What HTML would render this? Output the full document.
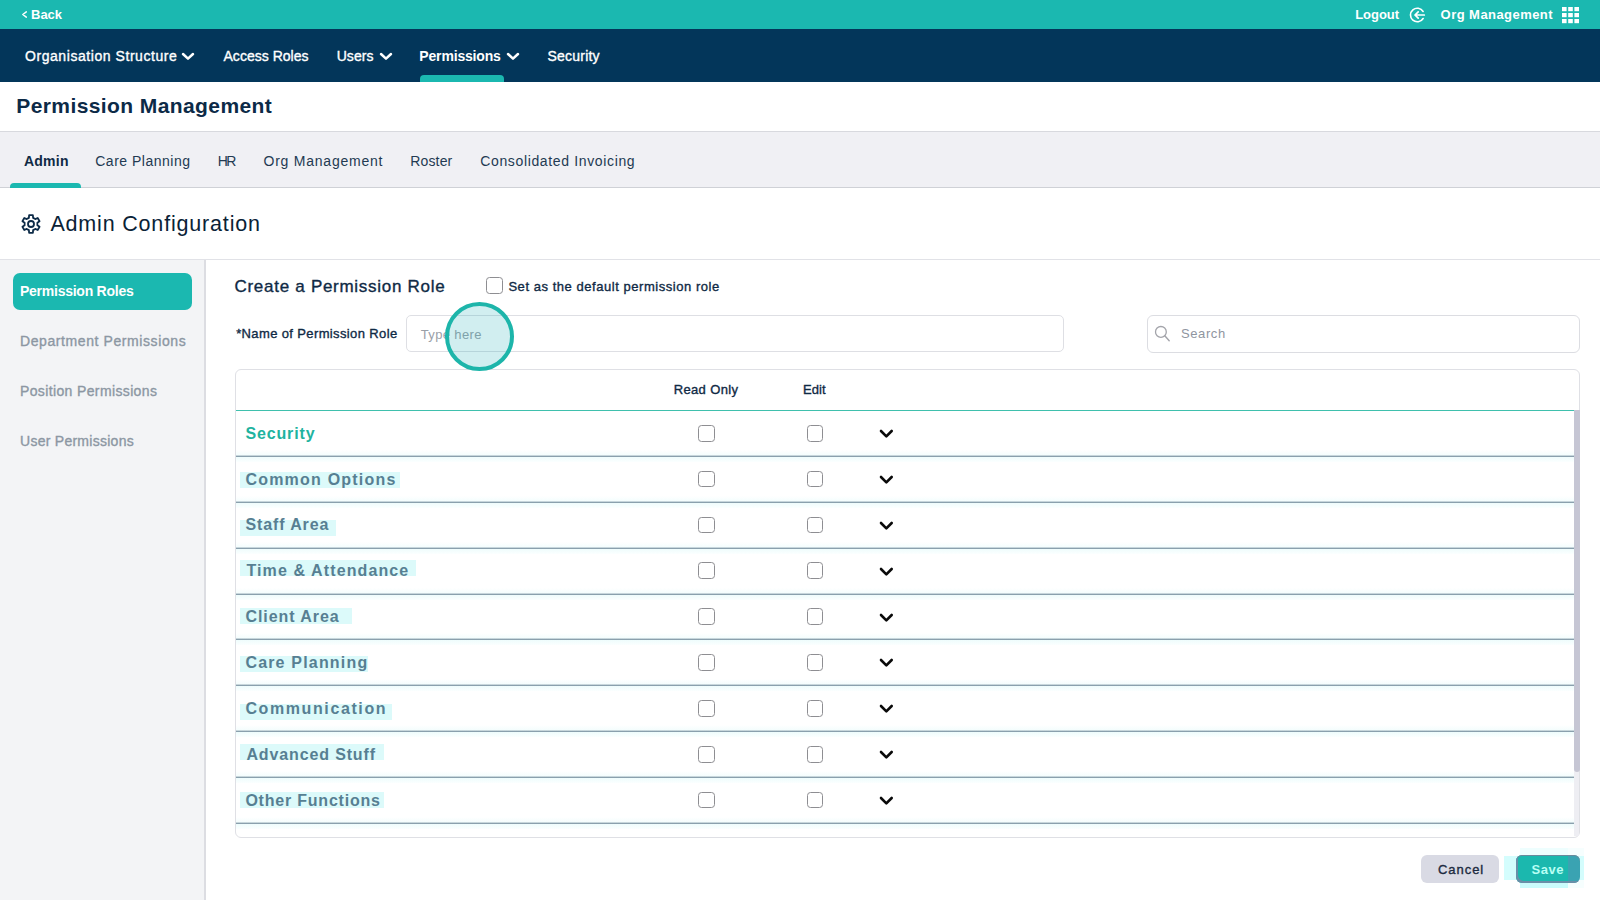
<!DOCTYPE html>
<html><head><meta charset="utf-8"><title>Permission Management</title>
<style>
html,body{margin:0;padding:0;}
body{width:1600px;height:900px;overflow:hidden;position:relative;background:#fff;font-family:"Liberation Sans",sans-serif;}
.t{position:absolute;white-space:nowrap;line-height:1;}
.abs{position:absolute;}
.cb{position:absolute;box-sizing:border-box;width:16.8px;height:16.8px;border:1.2px solid #8e8e92;border-radius:3.5px;background:#fff;}
</style></head><body>
<div class="abs" style="left:0px;top:0px;width:1600px;height:29px;background:#1bb8b0"></div>
<div class="abs" style="left:0px;top:29px;width:1600px;height:53px;background:#03365a"></div>
<svg class="abs" style="left:20px;top:9px" width="10" height="12" viewBox="0 0 10 12"><polyline points="6.3,2.9 2.8,5.5 6.3,8.1" fill="none" stroke="#fff" stroke-width="1.5" stroke-linecap="round" stroke-linejoin="round"/></svg>
<div class="t" style="left:31.00px;top:8px;font-size:13px;font-weight:700;color:#fff;letter-spacing:0.0px;">Back</div>
<div class="t" style="left:1355.20px;top:8px;font-size:13px;font-weight:700;color:#fff;letter-spacing:-0.04px;">Logout</div>
<svg class="abs" style="left:1408px;top:7px" width="20" height="16" viewBox="0 0 20 16"><path d="M15.1,4.5 A6.8,6.8 0 1 0 15.1,11.5" fill="none" stroke="#fff" stroke-width="1.6" stroke-linecap="round"/><path d="M16.3,8 H7 M10.2,4.8 L7,8 L10.2,11.2" fill="none" stroke="#fff" stroke-width="1.7" stroke-linecap="round" stroke-linejoin="round"/></svg>
<div class="t" style="left:1440.60px;top:8px;font-size:13px;font-weight:700;color:#fff;letter-spacing:0.446px;">Org Management</div>
<svg class="abs" style="left:1562.2px;top:7px" width="18" height="18" viewBox="0 0 18 18"><rect x="0.0" y="0.0" width="4.6" height="4.2" fill="#fff"/><rect x="6.2" y="0.0" width="4.6" height="4.2" fill="#fff"/><rect x="12.4" y="0.0" width="4.6" height="4.2" fill="#fff"/><rect x="0.0" y="6.0" width="4.6" height="4.2" fill="#fff"/><rect x="6.2" y="6.0" width="4.6" height="4.2" fill="#fff"/><rect x="12.4" y="6.0" width="4.6" height="4.2" fill="#fff"/><rect x="0.0" y="12.0" width="4.6" height="4.2" fill="#fff"/><rect x="6.2" y="12.0" width="4.6" height="4.2" fill="#fff"/><rect x="12.4" y="12.0" width="4.6" height="4.2" fill="#fff"/></svg>
<div class="t" style="left:25.00px;top:49px;font-size:14px;color:#fff;letter-spacing:0.56px;-webkit-text-stroke:0.35px #fff;">Organisation Structure</div>
<svg class="abs" style="left:180.20px;top:51.30px" width="16.00" height="10.70" viewBox="0 0 16.00 10.70"><polyline points="3,3 8.00,7.70 13.00,3" fill="none" stroke="#fff" stroke-width="2.5" stroke-linecap="round" stroke-linejoin="round"/></svg>
<div class="t" style="left:223.50px;top:49px;font-size:14px;color:#fff;letter-spacing:0.022px;-webkit-text-stroke:0.35px #fff;">Access Roles</div>
<div class="t" style="left:336.65px;top:49px;font-size:14px;color:#fff;letter-spacing:0.089px;-webkit-text-stroke:0.35px #fff;">Users</div>
<svg class="abs" style="left:377.90px;top:51.30px" width="16.00" height="10.70" viewBox="0 0 16.00 10.70"><polyline points="3,3 8.00,7.70 13.00,3" fill="none" stroke="#fff" stroke-width="2.5" stroke-linecap="round" stroke-linejoin="round"/></svg>
<div class="t" style="left:419.35px;top:49px;font-size:14px;font-weight:700;color:#fff;letter-spacing:-0.175px;">Permissions</div>
<svg class="abs" style="left:505.20px;top:51.30px" width="16.00" height="10.70" viewBox="0 0 16.00 10.70"><polyline points="3,3 8.00,7.70 13.00,3" fill="none" stroke="#fff" stroke-width="2.5" stroke-linecap="round" stroke-linejoin="round"/></svg>
<div class="t" style="left:547.50px;top:49px;font-size:14px;color:#fff;letter-spacing:0.214px;-webkit-text-stroke:0.35px #fff;">Security</div>
<div class="abs" style="left:420px;top:75px;width:84px;height:7px;background:#1bb8b0;border-radius:4px 4px 0 0"></div>
<div class="t" style="left:16.30px;top:95px;font-size:21px;font-weight:700;color:#0c2a47;letter-spacing:0.405px;">Permission Management</div>
<div class="abs" style="left:0px;top:131px;width:1600px;height:55px;background:#f0f0f4;border-top:1px solid #d8d9de;border-bottom:1px solid #cfd1d6"></div>
<div class="t" style="left:24.00px;top:154px;font-size:14px;font-weight:700;color:#0f2a45;letter-spacing:0.225px;">Admin</div>
<div class="t" style="left:95.25px;top:154px;font-size:14px;color:#233a52;letter-spacing:0.5px;">Care Planning</div>
<div class="t" style="left:217.75px;top:154px;font-size:14px;color:#233a52;letter-spacing:-1.5px;">HR</div>
<div class="t" style="left:263.50px;top:154px;font-size:14px;color:#233a52;letter-spacing:0.769px;">Org Management</div>
<div class="t" style="left:410.25px;top:154px;font-size:14px;color:#233a52;letter-spacing:0.15px;">Roster</div>
<div class="t" style="left:480.25px;top:154px;font-size:14px;color:#233a52;letter-spacing:0.643px;">Consolidated Invoicing</div>
<div class="abs" style="left:10px;top:182.5px;width:71px;height:5px;background:#1bb8b0;border-radius:4px 4px 0 0"></div>
<svg class="abs" style="left:18.8px;top:212px" width="24" height="24" viewBox="0 0 24 24"><polygon points="9.88,5.85 10.13,3.20 13.87,3.20 14.12,5.85 16.26,7.09 18.69,5.98 20.56,9.22 18.38,10.76 18.38,13.24 20.56,14.78 18.69,18.02 16.26,16.91 14.12,18.15 13.87,20.80 10.13,20.80 9.88,18.15 7.74,16.91 5.31,18.02 3.44,14.78 5.62,13.24 5.62,10.76 3.44,9.22 5.31,5.98 7.74,7.09" fill="none" stroke="#0c2a47" stroke-width="1.8" stroke-linejoin="round"/><circle cx="12" cy="12" r="3.0" fill="none" stroke="#0c2a47" stroke-width="1.8"/></svg>
<div class="t" style="left:50.40px;top:214px;font-size:21.5px;color:#0a2236;letter-spacing:0.822px;">Admin Configuration</div>
<div class="abs" style="left:0px;top:259px;width:1600px;height:1px;background:#e1e2e7"></div>
<div class="abs" style="left:0px;top:260px;width:204px;height:640px;background:#f3f4f6;border-right:2px solid #dcdde2"></div>
<div class="abs" style="left:12.5px;top:272.5px;width:179px;height:37.5px;background:#1bb8b0;border-radius:7px"></div>
<div class="t" style="left:20.00px;top:284px;font-size:14px;font-weight:700;color:#fff;letter-spacing:-0.253px;">Permission Roles</div>
<div class="t" style="left:20.00px;top:334px;font-size:14px;color:#8c97a3;letter-spacing:0.59px;-webkit-text-stroke:0.35px #8c97a3;">Department Permissions</div>
<div class="t" style="left:20.00px;top:384px;font-size:14px;color:#8c97a3;letter-spacing:0.368px;-webkit-text-stroke:0.35px #8c97a3;">Position Permissions</div>
<div class="t" style="left:20.00px;top:434px;font-size:14px;color:#8c97a3;letter-spacing:0.267px;-webkit-text-stroke:0.35px #8c97a3;">User Permissions</div>
<div class="t" style="left:234.50px;top:278px;font-size:17px;color:#0f2a45;letter-spacing:0.717px;-webkit-text-stroke:0.35px #0f2a45;">Create a Permission Role</div>
<div class="cb" style="left:486px;top:277.2px;border-color:#8e8e92"></div>
<div class="t" style="left:508.40px;top:280px;font-size:13px;color:#0f2a45;letter-spacing:0.542px;-webkit-text-stroke:0.35px #0f2a45;">Set as the default permission role</div>
<div class="t" style="left:236.20px;top:327px;font-size:13px;color:#0f2a45;letter-spacing:0.37px;-webkit-text-stroke:0.35px #0f2a45;">*Name of Permission Role</div>
<div class="abs" style="left:405.5px;top:315.2px;width:656px;height:35.3px;border:1px solid #dedfe4;border-radius:5px"></div>
<div class="t" style="left:420.70px;top:328px;font-size:13px;color:#9aa0a8;letter-spacing:0.364px;">Type here</div>
<div class="abs" style="left:1146.7px;top:315px;width:431.3px;height:35.5px;border:1px solid #dcdde2;border-radius:6px"></div>
<svg class="abs" style="left:1153px;top:325px" width="20" height="20" viewBox="0 0 20 20"><circle cx="7.9" cy="6.9" r="5.4" fill="none" stroke="#a3a4aa" stroke-width="1.3"/><line x1="11.8" y1="10.8" x2="16.2" y2="15.8" stroke="#a3a4aa" stroke-width="1.4" stroke-linecap="round"/></svg>
<div class="t" style="left:1181.00px;top:327px;font-size:13px;color:#8f95a0;letter-spacing:0.6px;">Search</div>
<div class="abs" style="left:235px;top:369px;width:1343px;height:467px;border:1px solid #dfe0e5;border-radius:6px"></div>
<div class="t" style="left:673.70px;top:383px;font-size:13px;color:#0f2a45;letter-spacing:0.361px;-webkit-text-stroke:0.35px #0f2a45;">Read Only</div>
<div class="t" style="left:803.00px;top:383px;font-size:13px;color:#0f2a45;letter-spacing:0.033px;-webkit-text-stroke:0.35px #0f2a45;">Edit</div>
<div class="abs" style="left:236px;top:409.5px;width:1338px;height:1.6px;background:#3fc0ad"></div>
<div class="abs" style="left:1574px;top:410px;width:5px;height:426px;background:#eeeef3"></div>
<div class="abs" style="left:1574px;top:410px;width:5.5px;height:362px;background:#c6c6d4;border-radius:0 0 3px 3px"></div>
<div class="abs" style="left:240px;top:472px;width:160px;height:16px;background:#dcfafa"></div>
<div class="abs" style="left:240px;top:520px;width:96px;height:16px;background:#dcfafa"></div>
<div class="abs" style="left:240px;top:560px;width:176px;height:16px;background:#dcfafa"></div>
<div class="abs" style="left:240px;top:608px;width:112px;height:16px;background:#dcfafa"></div>
<div class="abs" style="left:240px;top:656px;width:128px;height:16px;background:#dcfafa"></div>
<div class="abs" style="left:240px;top:704px;width:152px;height:16px;background:#dcfafa"></div>
<div class="abs" style="left:240px;top:744px;width:144px;height:16px;background:#dcfafa"></div>
<div class="abs" style="left:240px;top:792px;width:144px;height:16px;background:#dcfafa"></div>
<div class="t" style="left:245.40px;top:426px;font-size:16px;font-weight:700;color:#1fb39f;letter-spacing:0.857px;">Security</div>
<div class="abs" style="left:236px;top:450.05px;width:1338px;height:12px;background:linear-gradient(#fff 0,#f3fdfd 45%,#8aa0ad 47%,#8aa0ad 55%,#eefcfc 57%,#fbffff 100%)"></div>
<div class="cb" style="left:698px;top:424.82px"></div>
<div class="cb" style="left:806.6px;top:424.82px"></div>
<svg class="abs" style="left:878.30px;top:428.23px" width="16.70" height="11.40" viewBox="0 0 16.70 11.40"><polyline points="3,3 8.35,8.40 13.70,3" fill="none" stroke="#0a0a0a" stroke-width="2.6" stroke-linecap="round" stroke-linejoin="round"/></svg>
<div class="t" style="left:245.40px;top:472px;font-size:16px;font-weight:700;color:#577f92;letter-spacing:1.215px;">Common Options</div>
<div class="abs" style="left:236px;top:495.9px;width:1338px;height:12px;background:linear-gradient(#fff 0,#f3fdfd 45%,#8aa0ad 47%,#8aa0ad 55%,#eefcfc 57%,#fbffff 100%)"></div>
<div class="cb" style="left:698px;top:470.68px"></div>
<div class="cb" style="left:806.6px;top:470.68px"></div>
<svg class="abs" style="left:878.30px;top:474.08px" width="16.70" height="11.40" viewBox="0 0 16.70 11.40"><polyline points="3,3 8.35,8.40 13.70,3" fill="none" stroke="#0a0a0a" stroke-width="2.6" stroke-linecap="round" stroke-linejoin="round"/></svg>
<div class="t" style="left:245.40px;top:517px;font-size:16px;font-weight:700;color:#577f92;letter-spacing:0.889px;">Staff Area</div>
<div class="abs" style="left:236px;top:541.75px;width:1338px;height:12px;background:linear-gradient(#fff 0,#f3fdfd 45%,#8aa0ad 47%,#8aa0ad 55%,#eefcfc 57%,#fbffff 100%)"></div>
<div class="cb" style="left:698px;top:516.52px"></div>
<div class="cb" style="left:806.6px;top:516.52px"></div>
<svg class="abs" style="left:878.30px;top:519.92px" width="16.70" height="11.40" viewBox="0 0 16.70 11.40"><polyline points="3,3 8.35,8.40 13.70,3" fill="none" stroke="#0a0a0a" stroke-width="2.6" stroke-linecap="round" stroke-linejoin="round"/></svg>
<div class="t" style="left:246.40px;top:563px;font-size:16px;font-weight:700;color:#577f92;letter-spacing:1.112px;">Time &amp; Attendance</div>
<div class="abs" style="left:236px;top:587.6px;width:1338px;height:12px;background:linear-gradient(#fff 0,#f3fdfd 45%,#8aa0ad 47%,#8aa0ad 55%,#eefcfc 57%,#fbffff 100%)"></div>
<div class="cb" style="left:698px;top:562.38px"></div>
<div class="cb" style="left:806.6px;top:562.38px"></div>
<svg class="abs" style="left:878.30px;top:565.77px" width="16.70" height="11.40" viewBox="0 0 16.70 11.40"><polyline points="3,3 8.35,8.40 13.70,3" fill="none" stroke="#0a0a0a" stroke-width="2.6" stroke-linecap="round" stroke-linejoin="round"/></svg>
<div class="t" style="left:245.40px;top:609px;font-size:16px;font-weight:700;color:#577f92;letter-spacing:0.94px;">Client Area</div>
<div class="abs" style="left:236px;top:633.45px;width:1338px;height:12px;background:linear-gradient(#fff 0,#f3fdfd 45%,#8aa0ad 47%,#8aa0ad 55%,#eefcfc 57%,#fbffff 100%)"></div>
<div class="cb" style="left:698px;top:608.23px"></div>
<div class="cb" style="left:806.6px;top:608.23px"></div>
<svg class="abs" style="left:878.30px;top:611.62px" width="16.70" height="11.40" viewBox="0 0 16.70 11.40"><polyline points="3,3 8.35,8.40 13.70,3" fill="none" stroke="#0a0a0a" stroke-width="2.6" stroke-linecap="round" stroke-linejoin="round"/></svg>
<div class="t" style="left:245.40px;top:655px;font-size:16px;font-weight:700;color:#577f92;letter-spacing:1.183px;">Care Planning</div>
<div class="abs" style="left:236px;top:679.3px;width:1338px;height:12px;background:linear-gradient(#fff 0,#f3fdfd 45%,#8aa0ad 47%,#8aa0ad 55%,#eefcfc 57%,#fbffff 100%)"></div>
<div class="cb" style="left:698px;top:654.08px"></div>
<div class="cb" style="left:806.6px;top:654.08px"></div>
<svg class="abs" style="left:878.30px;top:657.48px" width="16.70" height="11.40" viewBox="0 0 16.70 11.40"><polyline points="3,3 8.35,8.40 13.70,3" fill="none" stroke="#0a0a0a" stroke-width="2.6" stroke-linecap="round" stroke-linejoin="round"/></svg>
<div class="t" style="left:245.40px;top:701px;font-size:16px;font-weight:700;color:#577f92;letter-spacing:1.608px;">Communication</div>
<div class="abs" style="left:236px;top:725.15px;width:1338px;height:12px;background:linear-gradient(#fff 0,#f3fdfd 45%,#8aa0ad 47%,#8aa0ad 55%,#eefcfc 57%,#fbffff 100%)"></div>
<div class="cb" style="left:698px;top:699.92px"></div>
<div class="cb" style="left:806.6px;top:699.92px"></div>
<svg class="abs" style="left:878.30px;top:703.32px" width="16.70" height="11.40" viewBox="0 0 16.70 11.40"><polyline points="3,3 8.35,8.40 13.70,3" fill="none" stroke="#0a0a0a" stroke-width="2.6" stroke-linecap="round" stroke-linejoin="round"/></svg>
<div class="t" style="left:246.40px;top:747px;font-size:16px;font-weight:700;color:#577f92;letter-spacing:0.87px;">Advanced Stuff</div>
<div class="abs" style="left:236px;top:771.0px;width:1338px;height:12px;background:linear-gradient(#fff 0,#f3fdfd 45%,#8aa0ad 47%,#8aa0ad 55%,#eefcfc 57%,#fbffff 100%)"></div>
<div class="cb" style="left:698px;top:745.77px"></div>
<div class="cb" style="left:806.6px;top:745.77px"></div>
<svg class="abs" style="left:878.30px;top:749.17px" width="16.70" height="11.40" viewBox="0 0 16.70 11.40"><polyline points="3,3 8.35,8.40 13.70,3" fill="none" stroke="#0a0a0a" stroke-width="2.6" stroke-linecap="round" stroke-linejoin="round"/></svg>
<div class="t" style="left:245.40px;top:793px;font-size:16px;font-weight:700;color:#577f92;letter-spacing:0.786px;">Other Functions</div>
<div class="abs" style="left:236px;top:816.85px;width:1338px;height:12px;background:linear-gradient(#fff 0,#f3fdfd 45%,#8aa0ad 47%,#8aa0ad 55%,#eefcfc 57%,#fbffff 100%)"></div>
<div class="cb" style="left:698px;top:791.62px"></div>
<div class="cb" style="left:806.6px;top:791.62px"></div>
<svg class="abs" style="left:878.30px;top:795.02px" width="16.70" height="11.40" viewBox="0 0 16.70 11.40"><polyline points="3,3 8.35,8.40 13.70,3" fill="none" stroke="#0a0a0a" stroke-width="2.6" stroke-linecap="round" stroke-linejoin="round"/></svg>
<div class="abs" style="left:444.5px;top:302.2px;width:61px;height:61px;border:4px solid #1db5aa;border-radius:50%;background:rgba(26,168,178,0.2)"></div>
<div class="abs" style="left:1421px;top:855px;width:78px;height:28px;background:#d9dae4;border-radius:6px"></div>
<div class="t" style="left:1438.00px;top:863px;font-size:13px;color:#1c2a40;letter-spacing:0.95px;-webkit-text-stroke:0.35px #1c2a40;">Cancel</div>
<div class="abs" style="left:1504px;top:856px;width:80px;height:24px;background:#d4fdfd"></div>
<div class="abs" style="left:1520px;top:848px;width:48px;height:8px;background:#eefefe"></div>
<div class="abs" style="left:1520px;top:880px;width:48px;height:8px;background:#cafcfc"></div>
<div class="abs" style="left:1568px;top:848px;width:16px;height:8px;background:#f6fefe"></div>
<div class="abs" style="left:1568px;top:880px;width:16px;height:8px;background:#f6fefe"></div>
<div class="abs" style="left:1516.3px;top:855px;width:63.3px;height:28px;background:linear-gradient(90deg,#1bb8ae 0,#1bb8ae 81%,#3aa3b2 81%);border-radius:6px;box-shadow:inset 2px -2px 0 #6a8fa8, inset 0 1px 0 #6a8a9c"></div>
<div class="t" style="left:1531.50px;top:863px;font-size:13px;font-weight:700;color:#b8fff4;letter-spacing:0.5px;">Save</div>
</body></html>
